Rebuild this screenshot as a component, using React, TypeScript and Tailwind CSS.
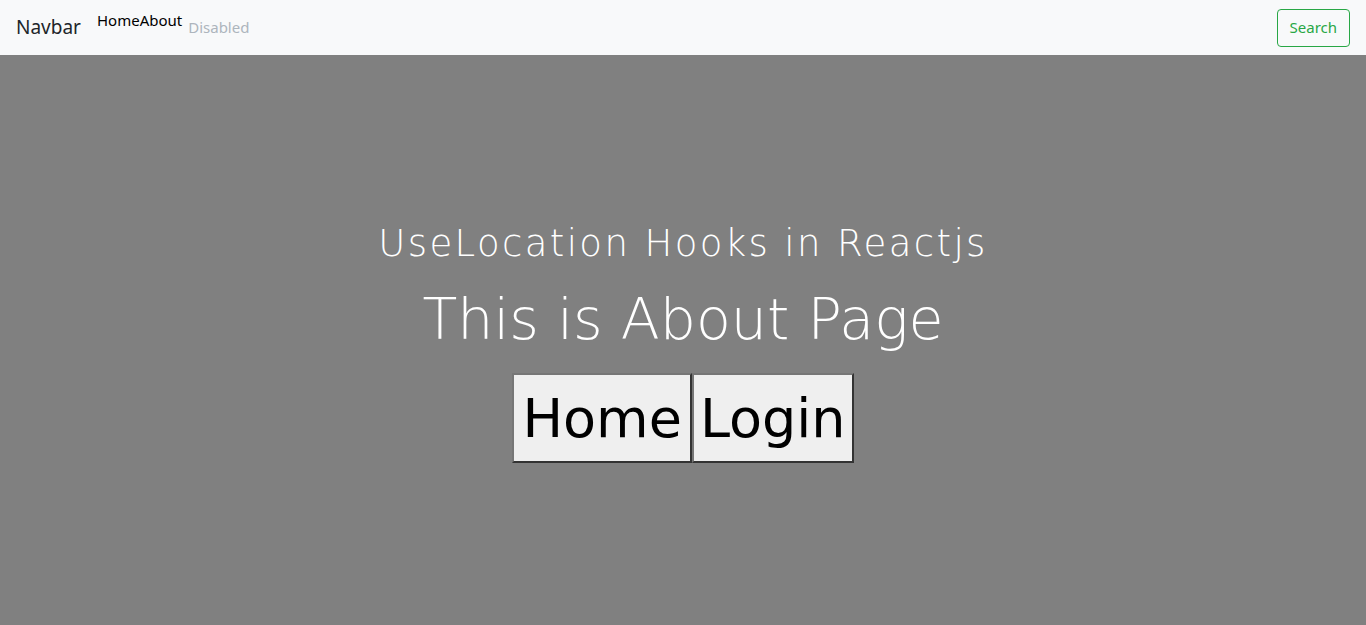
import React from 'react';

export default function App() {
  const gothic = { fontFamily: '"DejaVu Sans", "Liberation Sans", sans-serif' };

  return (
    <div className="w-full h-[625px] flex flex-col bg-[#808080]">
      {/* Top navbar */}
      <nav
        className="h-[55px] bg-[#f8f9fa] flex items-center px-4 shrink-0"
        style={{ fontFamily: '"Noto Sans", "Open Sans", sans-serif' }}
      >
        <span className="text-[19px] text-[#212529] mr-4">Navbar</span>
        <div className="flex self-start pt-[9px] text-[15px] text-black">
          <span>Home</span>
          <span>About</span>
        </div>
        <span className="ml-[6px] text-[15px] text-[#adb5bd]">Disabled</span>
        <button className="ml-auto h-[38px] px-3 border border-[#28a745] rounded text-[15px] text-[#28a745] bg-transparent">
          Search
        </button>
      </nav>

      {/* Page body */}
      <main className="flex-1 flex flex-col items-center justify-center pt-[8px] text-white" style={gothic}>
        <h1 className="text-[37px] font-light leading-none tracking-[2.4px] mb-[29px]">UseLocation Hooks in Reactjs</h1>
        <h2 className="text-[57px] font-light leading-none mb-[25px]">This is About Page</h2>
        <div className="flex">
          <button className="h-[90px] px-2 bg-[#efefef] text-black text-[54px] border-2 border-t-[#767676] border-l-[#767676] border-b-[#333] border-r-[#333]">
            Home
          </button>
          <button className="h-[90px] px-[6px] bg-[#efefef] text-black text-[54px] border-2 border-t-[#767676] border-l-[#767676] border-b-[#333] border-r-[#333]">
            Login
          </button>
        </div>
      </main>
    </div>
  );
}
